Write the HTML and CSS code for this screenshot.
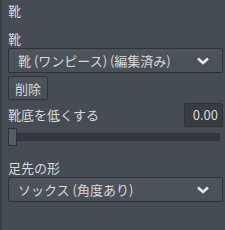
FILE: index.html
```html
<!DOCTYPE html>
<html lang="ja">
<head>
    <meta charset="UTF-8">
    <meta name="viewport" content="width=device-width, initial-scale=1.0">
    <title>靴</title>
    <link rel="stylesheet" href="styles.css">
</head>
<body>
    <div class="panel">
        <div class="section-title">靴</div>

        <div class="field">
            <div class="label">靴</div>
            <div class="select">
                <span>靴 (ワンピース) (編集済み)</span>
                <svg class="chevron" width="14" height="10" viewBox="0 0 14 10">
                    <path d="M2 2.5 L7 7 L12 2.5" fill="none" stroke="#e6e6e6" stroke-width="2.6"/>
                </svg>
            </div>
            <button class="btn">削除</button>
        </div>

        <div class="field">
            <div class="label-row">
                <div class="label">靴底を低くする</div>
                <div class="number">0.00</div>
            </div>
            <div class="slider">
                <div class="slider-handle"></div>
                <div class="slider-track"></div>
            </div>
        </div>

        <div class="field toe">
            <div class="label">足先の形</div>
            <div class="select">
                <span>ソックス (角度あり)</span>
                <svg class="chevron" width="14" height="10" viewBox="0 0 14 10">
                    <path d="M2 2.5 L7 7 L12 2.5" fill="none" stroke="#e6e6e6" stroke-width="2.6"/>
                </svg>
            </div>
        </div>
    </div>
</body>
</html>
```

FILE: styles.css
```css
body {
    margin: 0;
    padding: 0;
    width: 225px;
    height: 230px;
    overflow: hidden;
    background-color: #464c53;
    font-family: "Noto Sans CJK JP", "Noto Sans", sans-serif;
    font-size: 13px;
    color: #d8dadc;
}

.panel {
    height: 230px;
    border-left: 2px solid #383d43;
    padding: 3px 2px 0 6px;
    display: flex;
    flex-direction: column;
}

.section-title {
    line-height: 16px;
    margin-bottom: 12px;
}

.label {
    line-height: 16px;
}

.select {
    display: flex;
    align-items: center;
    justify-content: space-between;
    height: 23px;
    margin-top: 1px;
    padding: 0 12px 0 9px;
    background: linear-gradient(#4e545b, #4a5057);
    border: 1px solid #2f3338;
    border-radius: 2px;
}

.chevron {
    display: block;
}

.btn {
    display: block;
    margin-top: 3px;
    height: 24px;
    padding: 0 6px;
    font-family: inherit;
    font-size: 13px;
    color: #d8dadc;
    background: linear-gradient(#4e545b, #4a5057);
    border: 1px solid #2f3338;
    border-radius: 2px;
}

.label-row {
    display: flex;
    justify-content: space-between;
    align-items: center;
    margin-top: 3px;
}

.number {
    width: 33px;
    height: 22px;
    line-height: 22px;
    padding-right: 4px;
    text-align: right;
    background-color: #383c42;
    border: 1px solid #2f3338;
    border-radius: 2px;
}

.slider {
    display: flex;
    align-items: center;
    height: 18px;
    margin-top: 1px;
    margin-right: 3px;
}

.slider-handle {
    width: 7px;
    height: 16px;
    background-color: #575d64;
    border: 1px solid #2e3237;
}

.slider-track {
    flex: 1;
    height: 6px;
    background-color: #33373c;
    border: 1px solid #2e3237;
    border-left: none;
    border-radius: 0 2px 2px 0;
}

.toe {
    margin-top: 14px;
}
```
